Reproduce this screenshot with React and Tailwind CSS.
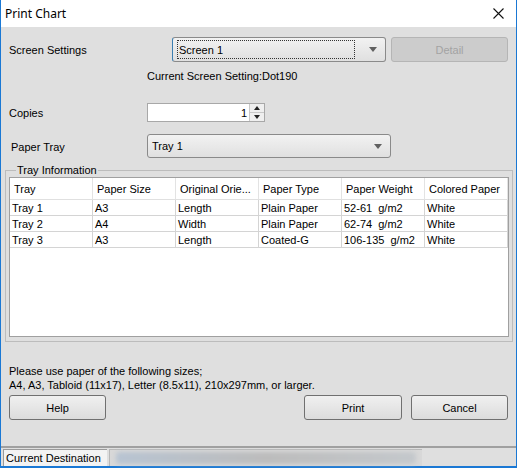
import React from "react";

const font = { fontFamily: '"Liberation Sans", Arial, sans-serif' };

function Triangle() {
  return (
    <svg width="8" height="5" viewBox="0 0 8 5" className="shrink-0">
      <path d="M0 0 H8 L4 5 Z" fill="#606060" />
    </svg>
  );
}

function Select({ value, className, focused }) {
  return (
    <div
      className={
        "flex items-center justify-between rounded-[3px] border border-[#8a8a8a] bg-gradient-to-b from-[#f2f2f2] to-[#e0e0e0] pl-[4px] pr-[8px] " +
        className
      }
    >
      <span
        className={
          "flex h-[19px] items-center " +
          (focused ? "w-[178px] border border-dotted border-[#333] pl-[1px]" : "")
        }
      >
        {value}
      </span>
      <Triangle />
    </div>
  );
}

function Button({ children, className, disabled }) {
  return (
    <div
      className={
        "flex items-center justify-center rounded-[3px] border " +
        (disabled
          ? "border-[#b5b5b5] bg-[#cccccc] text-[#a3a3a3] "
          : "border-[#707070] bg-gradient-to-b from-[#f0f0f0] to-[#dcdcdc] text-black ") +
        className
      }
    >
      {children}
    </div>
  );
}

const cols = ["Tray", "Paper Size", "Original Orie...", "Paper Type", "Paper Weight", "Colored Paper"];
const rows = [
  ["Tray 1", "A3", "Length", "Plain Paper", "52-61  g/m2", "White"],
  ["Tray 2", "A4", "Width", "Plain Paper", "62-74  g/m2", "White"],
  ["Tray 3", "A3", "Length", "Coated-G", "106-135  g/m2", "White"],
];

export default function App() {
  return (
    <div
      className="flex h-[468px] w-[517px] flex-col border-x border-b-2 border-[#1a78d4] bg-[#dfdfdf] text-[11px] leading-[14px] text-black"
      style={font}
    >
      {/* title bar */}
      <div className="flex h-[27px] shrink-0 items-center justify-between bg-white pl-[4px] pr-[12px]">
        <span className="text-[12px]" style={{ fontFamily: '"Noto Sans", sans-serif' }}>
          Print Chart
        </span>
        <svg width="11" height="11" viewBox="0 0 11 11">
          <path d="M0.5 0.5 L10.5 10.5 M10.5 0.5 L0.5 10.5" stroke="#111" strokeWidth="1.1" />
        </svg>
      </div>

      {/* screen settings */}
      <div className="mt-[10px] flex h-[25px] items-center">
        <span className="w-[171px] pl-[8px]">Screen Settings</span>
        <Select value="Screen 1" className="h-[25px] w-[214px] border-l-[#3c7fb1]" focused />
        <Button disabled className="ml-[5px] h-[25px] w-[117px]">
          Detail
        </Button>
      </div>
      <div className="mt-[7px] pl-[146px]">Current Screen Setting:Dot190</div>

      {/* copies */}
      <div className="mt-[20px] flex h-[19px] items-center">
        <span className="w-[146px] pl-[8px]">Copies</span>
        <div className="flex h-[19px] w-[118px] items-center border border-[#a8a8a8] bg-white">
          <span className="flex-1 pr-[2px] text-right">1</span>
          <div className="flex h-[17px] w-[15px] flex-col border-l border-[#c8c8c8]">
            <div className="flex flex-1 items-center justify-center border-b border-[#c8c8c8] bg-[#efefef]">
              <svg width="6" height="4" viewBox="0 0 6 4">
                <path d="M0 4 L3 0 L6 4 Z" fill="#222" />
              </svg>
            </div>
            <div className="flex flex-1 items-center justify-center bg-[#efefef]">
              <svg width="6" height="4" viewBox="0 0 6 4">
                <path d="M0 0 L6 0 L3 4 Z" fill="#222" />
              </svg>
            </div>
          </div>
        </div>
      </div>

      {/* paper tray */}
      <div className="mt-[12px] flex h-[24px] items-center">
        <span className="w-[146px] pl-[10px] pt-[2px]">Paper Tray</span>
        <Select value="Tray 1" className="h-[24px] w-[244px]" />
      </div>

      {/* tray information group */}
      <fieldset className="mx-[4px] mt-[5px] h-[179px] border border-[#bcbcbc] px-[3px] pb-[4px]">
        <legend className="ml-[7px] px-[1px] leading-[14px]">Tray Information</legend>
        <div className="h-[160px] border border-[#a0a0a0] bg-white">
          <div className="flex h-[22px] border-b border-[#e0e0e0]">
            {cols.map((c) => (
              <div
                key={c}
                className="flex w-[83px] items-center whitespace-nowrap border-r border-[#e3e3e3] pl-[4px]"
              >
                {c}
              </div>
            ))}
          </div>
          {rows.map((r) => (
            <div key={r[0]} className="flex h-[16px] border-b border-[#d4d4d4]">
              {r.map((c, i) => (
                <div
                  key={i}
                  className="flex w-[83px] items-center whitespace-pre border-r border-[#d4d4d4] pl-[2px]"
                >
                  {c}
                </div>
              ))}
            </div>
          ))}
        </div>
      </fieldset>

      {/* info text */}
      <div className="mt-[22px] pl-[8px]">
        <div>Please use paper of the following sizes;</div>
        <div>A4, A3, Tabloid (11x17), Letter (8.5x11), 210x297mm, or larger.</div>
      </div>

      {/* buttons */}
      <div className="mt-[3px] flex h-[25px] items-center px-[8px]">
        <Button className="h-[25px] w-[97px]">Help</Button>
        <div className="flex-1" />
        <Button className="h-[25px] w-[98px]">Print</Button>
        <Button className="ml-[9px] h-[25px] w-[97px]">Cancel</Button>
      </div>

      {/* status bar */}
      <div className="mt-auto flex h-[20px] items-stretch border-t-2 border-[#a0a0a0] pt-[1px] pl-[2px]">
        <div className="flex w-[104px] items-center whitespace-nowrap border-l border-t border-[#9a9a9a] bg-[#f3f3f3] pl-[2px]">
          Current Destination
        </div>
        <div className="ml-[2px] flex w-[313px] items-center border-l border-t border-[#b8b8b8] bg-[#d8d8d8] pl-[6px]">
          <div className="h-[12px] w-[300px] rounded-sm bg-gradient-to-r from-[#b8c4d2] via-[#bcbcbc] to-[#c4c8cc] blur-[2px]" />
        </div>
      </div>
    </div>
  );
}
